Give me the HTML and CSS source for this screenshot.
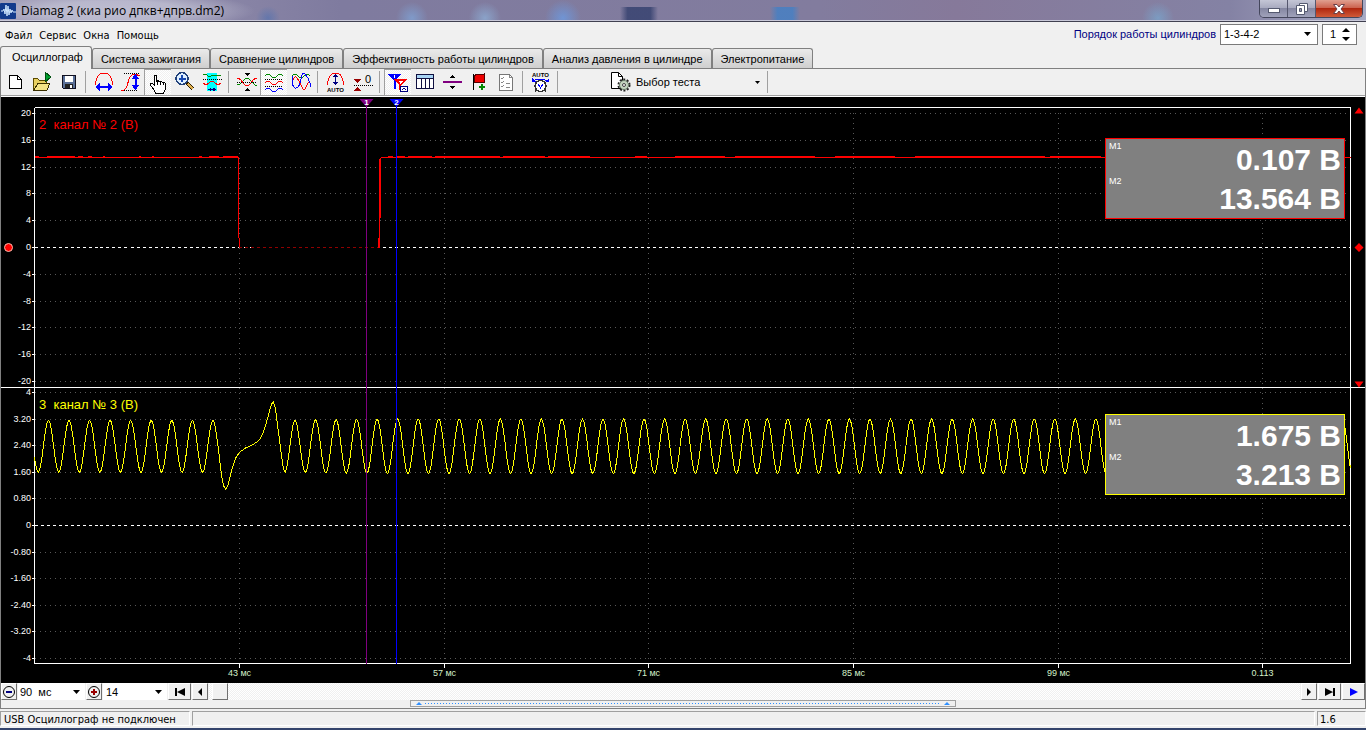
FILE: index.html
```html
<!DOCTYPE html>
<html lang="ru">
<head>
<meta charset="utf-8">
<title>Diamag 2 (киа рио дпкв+дпрв.dm2)</title>
<link rel="stylesheet" href="styles.css">
</head>
<body>
<header class="titlebar">
  <svg class="app-icon" viewBox="0 0 16 16"><rect width="16" height="16" rx="1" fill="#123a8c"/><path d="M1 8h2l1-2 1 5 1-9 1 11 1-10 1 9 1-6 1 4 1-3 1 2h3" fill="none" stroke="#cfe6ff"/></svg>
  <span class="title">Diamag 2 (киа рио дпкв+дпрв.dm2)</span>
  <div class="window-buttons">
    <button class="win" aria-label="Свернуть"><svg width="14" height="12" viewBox="0 0 14 12"><rect x="1.5" y="5.500" width="11" height="4" fill="#fff" stroke="#555a70"/></svg></button>
    <button class="win" aria-label="Развернуть"><svg width="14" height="14" viewBox="0 0 14 14"><path d="M4.500 1.500h8v8h-8z" fill="#fff" stroke="#555a70"/><path d="M1.500 3.500h8v9h-8z" fill="#fff" stroke="#555a70"/><path d="M4.500 6.500h2v3h-2z" fill="#9a9cb2" stroke="#555a70"/></svg></button>
    <button class="win close" aria-label="Закрыть"><svg width="14" height="12" viewBox="0 0 14 12"><path d="M1.500 1.500h3.500l2 2.500 2-2.500h3.500L9 6l3.500 4.500H9L7 8l-2 2.500H1.500L5 6z" fill="#fff" stroke="#6a4048"/></svg></button>
  </div>
</header>

<div class="menu-row">
  <nav class="menu">
    <button>Файл</button><button>Сервис</button><button>Окна</button><button>Помощь</button>
  </nav>
  <div class="order">
    <label for="order">Порядок работы цилиндров</label>
    <span class="combo framed order-combo"><select id="order"><option>1-3-4-2</option><option>1-2-4-3</option></select><svg class="chev" width="7" height="4" viewBox="0 0 7 4"><path d="M0 0h7L3.500 4z"/></svg></span>
    <span class="combo framed spin"><input id="cyl" type="text" value="1" aria-label="Номер цилиндра"><svg width="8" height="13" viewBox="0 0 8 13"><path d="M0 4h8L4 0zM0 9h8l-4 4z"/></svg></span>
  </div>
</div>

<nav class="tabs">
  <button class="tab active">Осциллограф</button>
  <button class="tab">Система зажигания</button>
  <button class="tab">Сравнение цилиндров</button>
  <button class="tab">Эффективность работы цилиндров</button>
  <button class="tab">Анализ давления в цилиндре</button>
  <button class="tab">Электропитание</button>
</nav>

<main class="page">
  <div class="toolbar">
    <button class="tool" aria-label="Новый"><svg viewBox="0 0 24 24"><path d="M6.500 5.500h8l4 4v9h-12z" fill="#fff" stroke="#000"/><path d="M14.500 5.500v4h4" fill="none" stroke="#000"/></svg></button>
    <button class="tool" aria-label="Открыть"><svg viewBox="0 0 24 24"><path d="M3.500 19.500v-11h4l2 2h7v9z" fill="#e8d060" stroke="#5a4a00"/><path d="M4 20l4-7h12l-3 7z" fill="#f4e486" stroke="#3a3000"/><path d="M15 2l6 5-6 5z" fill="#00a030" stroke="#005010"/></svg></button>
    <button class="tool" aria-label="Сохранить"><svg viewBox="0 0 24 24"><path d="M5.500 5.500h13v13h-12l-1-1z" fill="#5a7098" stroke="#101020"/><path d="M8 6h8v6H8z" fill="#fff"/><path d="M8 14h8v4H8z" fill="#222"/><path d="M13 15h2v3h-2z" fill="#fff"/></svg></button>
    <span class="sep"></span>
    <button class="tool" aria-label="Ширина"><svg viewBox="0 0 24 24"><path d="M3 15c0-3 1-4 2-7s4-5 7-5 6 2 7 5 2 4 2 7" fill="none" stroke="#f00"/><path d="M4 17h16" stroke="#00f" stroke-width="2"/><path d="M3 17l5-4v8zM21 17l-5-4v8z" fill="#00f"/></svg></button>
    <button class="tool" aria-label="Высота"><svg viewBox="0 0 24 24"><path d="M5 3.500h15M3 20.500h15" stroke="#000" stroke-dasharray="1 1"/><path d="M2 20h3c5-2 3-16 11-16l5 2" fill="none" stroke="#f00"/><path d="M16.500 6v13" stroke="#00f" stroke-width="2"/><path d="M16.500 4l-4 5h8zM16.500 20l-4-5h8z" fill="#00f"/></svg></button>
    <button class="tool pressed" aria-label="Рука"><svg viewBox="0 0 24 24"><path d="M8.500 14.500V4.500h2v6l1-1 2 1 1.500 0 1.500 1 2 0 1 1.500v5l-2 4h-8l-2-4-3-4v-1.500h2z" fill="#fff" stroke="#000"/><path d="M11.500 10v4M14.500 10v4M17.500 11v3" stroke="#000"/></svg></button>
    <button class="tool" aria-label="Лупа"><svg viewBox="0 0 24 24"><path d="M14 13l6 6" stroke="#302000" stroke-width="4"/><path d="M15 14l5 5" stroke="#e0b050" stroke-width="2"/><circle cx="9" cy="8.500" r="6" fill="#dff0ff" stroke="#20407a" stroke-width="1.500"/><path d="M5.500 8.500h7M9 5v7" stroke="#1848b0" stroke-width="2"/></svg></button>
    <button class="tool" aria-label="Фрагмент"><svg viewBox="0 0 24 24"><path d="M7 3h10v18H7z" fill="#0ff"/><path d="M3 5q2-2 4 0t4 1 5-1 5 0" fill="none" stroke="#080"/><path d="M3 9.500h19" stroke="#000" stroke-dasharray="1 1"/><path d="M3 13q3 3 6 0t6 0 6 0" fill="none" stroke="#f00"/><path d="M8 19.500h8" stroke="#000080"/><path d="M8 19.500l3-2v4zM16 19.500l-3-2v4z" fill="#000080"/></svg></button>
    <span class="sep"></span>
    <button class="tool" aria-label="Совместить"><svg viewBox="0 0 24 24"><path d="M2 15q3 0 6-4 4-6 8 0 3 4 6 5" fill="none" stroke="#080"/><path d="M2 8q3 0 6 5 4 5 8 0 3-5 6-5" fill="none" stroke="#f00"/><path d="M2 12.500h20" stroke="#000" stroke-dasharray="1 1"/><path d="M9 3h6l-3 3zM9 21h6l-3-3z"/></svg></button>
    <button class="tool pressed" aria-label="Раздельно"><svg viewBox="0 0 24 24"><g fill="none"><path d="M3 5q3-4 6 0t6 0 6 0" stroke="#080"/><path d="M3 12q3-4 6 0t6 0 6 0" stroke="#f00"/><path d="M3 19q3-4 6 0t6 0 6 0" stroke="#00f"/><path d="M3 8.500h18M3 15.500h18" stroke="#000" stroke-dasharray="1 1"/></g></svg></button>
    <button class="tool" aria-label="Наложение"><svg viewBox="0 0 24 24"><g fill="none"><path d="M3 6q3-4 6 0t6 0 6 0" stroke="#080"/><path d="M3 14q2-10 5-6t5 9 4 0 4-5" stroke="#f00"/><path d="M3 6q0 13 4 12t5-9 4-5 5 9l1 4" stroke="#00f"/></g></svg></button>
    <span class="sep"></span>
    <button class="tool" aria-label="Авто"><svg viewBox="0 0 24 24"><path d="M3 15c0-3 1-4 2-7s4-5 7-5 5 2 6 5 2 4 2 7" fill="none" stroke="#f00"/><path d="M11.500 5v9" stroke="#000080"/><path d="M9 7h5l-2.500-3zM9 12h5l-2.500 3z" fill="#000080"/><text x="3" y="22" class="micro">AUTO</text></svg></button>
    <button class="tool" aria-label="Ноль"><svg viewBox="0 0 24 24"><path d="M3 15.500h19" stroke="#000" stroke-dasharray="1 1"/><path d="M3 9h7l-3.500 4zM3 21h7l-3.500-4z" fill="#900"/><text x="14" y="13" class="zero">0</text></svg></button>
    <span class="sep"></span>
    <button class="tool pressed" aria-label="Маркеры"><svg viewBox="0 0 24 24"><path d="M2 3h13L9.500 9v9h-2V9z" fill="#00f"/><path d="M8 8h13l-5.500 6-1 5h-2v-6z" fill="#f00"/><path d="M8.500 4v3M13 10.500h3l-2 2" stroke="#fff" fill="none"/><path d="M14.500 15.500h7v5h-7z" fill="#fff" stroke="#000080"/><path d="M16 18h1l1-1 1 1h1" fill="none" stroke="#000080"/></svg></button>
    <button class="tool" aria-label="Таблица"><svg viewBox="0 0 24 24"><path d="M3.500 4.500h17v14h-17z" fill="#fff" stroke="#101040"/><path d="M4 5h16v3H4z" fill="#a8d4f4"/><path d="M4 8.500h16M8.500 8v10M12.500 8v10M16.500 8v10" stroke="#101040"/></svg></button>
    <button class="tool" aria-label="Уровень"><svg viewBox="0 0 24 24"><path d="M3 12h19" stroke="#800080" stroke-width="2"/><path d="M10 8h5l-2.500-3zM10 16h5l-2.500 3z"/></svg></button>
    <button class="tool" aria-label="Флаг"><svg viewBox="0 0 24 24"><path d="M6.500 4v16" stroke="#000"/><path d="M7 6l3-2 4 1 3-1v7l1 1-3 1-4-1-4 1z" fill="#e00" stroke="#500"/><path d="M12 17h6M15 14v6" stroke="#080" stroke-width="2"/></svg></button>
    <button class="tool" aria-label="Список"><svg viewBox="0 0 24 24"><path d="M5.500 4.500h10l3 3v13h-13z" fill="#fff" stroke="#777"/><path d="M15.500 4.500v3h3M7 8l1 1 2-2M7 12l1 1 2-2M7 16l1 1 2-2M12 13h4M12 17h4" fill="none" stroke="#888"/></svg></button>
    <span class="sep"></span>
    <button class="tool" aria-label="Автоопределение"><svg viewBox="0 0 24 24"><text x="3" y="7" class="micro">AUTO</text><path d="M4 11q7-4 15 0" fill="none" stroke="#00f"/><path d="M3 8v4h4zM20 8v4h-4z" fill="#00f"/><circle cx="11.500" cy="16" r="5.500" fill="#fff" stroke="#333" stroke-width="1.500"/><path d="M9 14l2.500 4 2.500-4" fill="none" stroke="#00f"/><path d="M7 20l-1 2M16 20l1 2" stroke="#333"/></svg></button>
    <span class="sep"></span>
    <button class="test"><svg viewBox="0 0 24 24"><path d="M3.500 2.500h7l4 4v12h-11z" fill="#fff" stroke="#000"/><path d="M10.500 2.500v4h4" fill="none" stroke="#000"/><circle cx="16" cy="15" r="5.500" fill="none" stroke="#222" stroke-width="2" stroke-dasharray="2 1.500"/><circle cx="16" cy="15" r="4.500" fill="#c4d4c0" stroke="#667a66"/><circle cx="16" cy="15" r="1.500" fill="#fff" stroke="#444"/></svg><span>Выбор теста</span><svg class="chev" width="5" height="3" viewBox="0 0 5 3"><path d="M0 0h5L2.500 3z"/></svg></button>
    <span class="sep"></span>
  </div>

  <section class="scope">
    <svg class="plot" id="plot" role="img" aria-label="Осциллограмма"></svg>
    <div class="readout readout-red">
      <span class="tag">M1</span><span class="value">0.107 В</span>
      <span class="tag">M2</span><span class="value">13.564 В</span>
    </div>
    <div class="readout readout-yellow">
      <span class="tag">M1</span><span class="value">1.675 В</span>
      <span class="tag">M2</span><span class="value">3.213 В</span>
    </div>
  </section>

  <div class="transport">
    <button class="key narrow" aria-label="Сжать"><svg width="14" height="14" viewBox="0 0 14 14"><circle cx="7" cy="7" r="5.500" fill="none" stroke="#000"/><path d="M4 7h6" stroke="#000080" stroke-width="2"/></svg></button>
    <span class="combo range"><select aria-label="Развёртка"><option>90&nbsp; мс</option></select><svg class="chev" width="7" height="4" viewBox="0 0 7 4"><path d="M0 0h7L3.500 4z"/></svg></span>
    <button class="key narrow" aria-label="Растянуть"><svg width="14" height="14" viewBox="0 0 14 14"><circle cx="7" cy="7" r="5.500" fill="none" stroke="#000"/><path d="M4 7h6M7 4v6" stroke="#900" stroke-width="2"/></svg></button>
    <span class="combo count"><select aria-label="Масштаб"><option>14</option></select><svg class="chev" width="7" height="4" viewBox="0 0 7 4"><path d="M0 0h7L3.500 4z"/></svg></span>
    <button class="key" aria-label="В начало"><svg width="12" height="8" viewBox="0 0 12 8"><path d="M1 0h2v8H1zM11 0v8L3 4z"/></svg></button>
    <button class="key narrow" aria-label="Назад"><svg width="4" height="8" viewBox="0 0 4 8"><path d="M4 0v8L0 4z"/></svg></button>
    <div class="track"><button class="key narrow thumb" aria-label="Прокрутка"></button></div>
    <button class="key narrow" aria-label="Вперёд"><svg width="4" height="8" viewBox="0 0 4 8"><path d="M0 0v8l4-4z"/></svg></button>
    <button class="key" aria-label="В конец"><svg width="12" height="8" viewBox="0 0 12 8"><path d="M9 0h2v8H9zM1 0v8l8-4z"/></svg></button>
    <button class="key" aria-label="Пуск"><svg width="8" height="8" viewBox="0 0 8 8"><path d="M0 0v8l8-4z" fill="#00f"/></svg></button>
  </div>
  <div class="splitter"><div class="grip"><svg width="6" height="3" viewBox="0 0 6 3"><path d="M0 3h6L3 0z"/></svg><span class="dots"></span><svg width="6" height="3" viewBox="0 0 6 3"><path d="M0 3h6L3 0z"/></svg></div></div>
</main>

<footer class="status">
  <span class="cell device">USB Осциллограф не подключен</span>
  <span class="cell fill"></span>
  <span class="cell version">1.6</span>
</footer>
<script src="plot.js"></script>
</body>
</html>
```

FILE: styles.css
```css
* { box-sizing: border-box; }
body {
  margin: 0;
  height: 100vh;
  display: flex;
  flex-direction: column;
  background: #f0f0f0;
  color: #000;
  font: 11px/14px "Liberation Sans", Arial, sans-serif;
  overflow: hidden;
}
button, select, input {
  font: inherit;
  color: inherit;
  margin: 0;
  padding: 0;
  border: 0;
  background: none;
  border-radius: 0;
  appearance: none;
  outline: 0;
}
svg { display: block; flex: none; }

.titlebar {
  flex: none;
  height: 22px;
  display: flex;
  align-items: flex-start;
  gap: 5px;
  border-bottom: 1px solid #404050;
  box-shadow: inset 0 -1px #c8c8d8;
  background:
    radial-gradient(ellipse 140px 20px at 115px 11px, #c4c4d6e0, #c4c4d6c0 50%, #c4c4d600),
    radial-gradient(circle at 268px 18px, #5070b0a0 0, #5070b000 12px),
    radial-gradient(circle at 412px 18px, #7fa8dcb0 0, #7fa8dc00 16px),
    radial-gradient(circle at 485px 18px, #8fb4dcb0 0, #8fb4dc00 16px),
    radial-gradient(circle at 563px 18px, #6c9ae0d0 0, #6c9ae000 18px),
    linear-gradient(90deg, #34406e00, #34406ed0 20% 80%, #34406e00) 620px 7px / 38px 14px no-repeat,
    linear-gradient(90deg, #3f80c800, #3f80c8c0 25% 75%, #3f80c800) 770px 7px / 30px 14px no-repeat,
    radial-gradient(circle at 1158px 18px, #78a8d0b0 0, #78a8d000 16px),
    linear-gradient(90deg, #9c98b4, #7f7b9f 25%, #827c9e 60%, #86799a 70%, #8482a4 90%, #a8aac4);
}
.app-icon { width: 16px; height: 16px; margin-top: 3px; }
.title { font: 12px/15px "Open Sans", "Noto Sans", sans-serif; padding-top: 3px; }
.window-buttons {
  margin-left: auto;
  margin-right: 3px;
  display: flex;
  height: 18px;
  border: 1px solid #44465c;
  border-top: 0;
  border-radius: 0 0 5px 5px;
  overflow: hidden;
}
.win {
  width: 28px;
  display: grid;
  place-items: center;
  border-right: 1px solid #55576e;
  background: linear-gradient(#c4c6d6, #a9abc0 45%, #8587a2 50%, #a0a2ba);
}
.close { width: 46px; border-right: 0; background: linear-gradient(#e0a090, #cc6450 45%, #b02810 50%, #d05a38); }

.menu-row { flex: none; height: 24px; display: flex; justify-content: space-between; }
.menu { display: flex; align-items: center; gap: 7px; padding: 3px 0 0 5px; font-family: "DejaVu Sans Condensed", "DejaVu Sans", sans-serif; }
.order { display: flex; align-items: center; gap: 4px; padding-right: 9px; }
.order label { color: #000080; }
.combo { display: flex; align-items: center; background: #fff; }
.combo select, .combo input { flex: 1; min-width: 0; height: 100%; padding-left: 3px; }
.framed { height: 21px; border: 1px solid #7a7a7a; }
.order-combo { width: 98px; padding-right: 6px; }
.spin { width: 35px; padding-right: 6px; }
.spin input { padding-left: 7px; }

.tabs { flex: none; display: flex; align-items: flex-end; border-bottom: 1px solid #808080; height: 23px; }
.tab {
  height: 20px;
  padding: 0 8px;
  border: 1px solid #808080;
  border-bottom: 0;
  border-radius: 3px 3px 0 0;
  background: linear-gradient(#eaeaea, #cfcfcf);
  white-space: nowrap;
}
.tab.active { height: 23px; margin-bottom: -1px; padding: 0 8px 2px 11px; background: #f0f0f0; }

.page { flex: 1; min-height: 0; display: flex; flex-direction: column; border: 1px solid #808080; border-top: 0; }
.toolbar { flex: none; height: 28px; display: flex; align-items: center; border-bottom: 1px solid #fff; box-shadow: inset 0 -1px #a0a0a0; padding-bottom: 1px; }
.tool { flex: none; width: 27px; height: 26px; display: grid; place-items: center; }
.tool svg, .test svg:first-child { width: 24px; height: 24px; }
.tool svg { shape-rendering: crispEdges; }
.pressed, .track { background: repeating-conic-gradient(#f0f0f0 0 25%, #fff 0 50%) 0 0 / 2px 2px; }
.pressed { border-left: 1px solid #a0a0a0; border-top: 1px solid #a0a0a0; }
.sep { flex: none; width: 8px; height: 22px; background: linear-gradient(#a0a0a0, #a0a0a0) 3px 0 / 1px 100% no-repeat; }
.test { display: flex; align-items: center; gap: 4px; width: 156px; margin-left: 46px; padding-right: 4px; text-align: left; }
.test span { flex: 1; }
.micro { font: bold 6px "Liberation Sans", sans-serif; }
.zero { font: 11px "Liberation Sans", sans-serif; }

.scope { flex: 1; min-height: 0; position: relative; background: #000; }
.plot { position: absolute; inset: 0; width: 100%; height: 100%; }
.plot text { font: 9px "Liberation Sans", Arial, sans-serif; fill: #fff; }
.plot .time { fill: #d4f0c8; text-anchor: middle; }
.plot .axis { text-anchor: end; }
.plot .name { font-size: 13px; white-space: pre; }
.plot .flag { font: bold 8px "Liberation Sans", sans-serif; text-anchor: middle; }
.readout {
  position: absolute;
  right: 20px;
  width: 240px;
  height: 81px;
  padding: 2px 3px 0;
  display: grid;
  grid-template: 35px 42px / auto 1fr;
  background: #808080;
  border: 1px solid;
  color: #fff;
}
.readout-red { top: 7%; border-color: #f00; }
.readout-yellow { top: 54.1%; border-color: #ff0; }
.tag { font-size: 9px; line-height: 10px; }
.value { font-size: 30px; font-weight: bold; line-height: 38px; text-align: right; }
.value ~ .value { padding-top: 4px; }

.transport { flex: none; height: 17px; display: flex; gap: 1px; background: #f0f0f0; }
.key { flex: none; width: 23px; display: grid; place-items: center; background: #f0f0f0; border: 1px solid; border-color: #fff #707070 #707070 #fff; }
.narrow { width: 16px; }
.range { width: 67px; padding-right: 5px; }
.count { width: 64px; padding-right: 5px; }
.range select { padding-left: 2px; }
.track { flex: 1; display: flex; padding-left: 3px; }
.splitter { flex: none; height: 8px; display: flex; justify-content: center; align-items: flex-start; }
.grip { width: 40%; height: 7px; display: flex; align-items: center; gap: 3px; padding: 0 5px; border: 1px solid #a0a0a0; fill: #2f8fff; }
.dots { flex: 1; height: 1px; background: repeating-linear-gradient(90deg, #2f8fff 0 1px, transparent 0 3px); }

.status {
  flex: none;
  height: 21px;
  display: flex;
  gap: 2px;
  padding: 2px 0;
  border-bottom: 2px solid #34446c;
  font-family: "DejaVu Sans Condensed", "DejaVu Sans", sans-serif;
}
.cell { border: 1px solid; border-color: #a0a0a0 #fff #fff #a0a0a0; padding: 1px 3px; white-space: nowrap; }
.device { width: 190px; }
.fill { flex: 1; }
.version { width: 49px; padding-left: 2px; }
```

FILE: plot.js
```js
const NS = "http://www.w3.org/2000/svg";
const plot = document.getElementById("plot");

function add(tag, attrs, text) {
  const node = document.createElementNS(NS, tag);
  for (const key in attrs) node.setAttribute(key, attrs[key]);
  if (text !== undefined) node.textContent = text;
  plot.appendChild(node);
  return node;
}

function line(x1, y1, x2, y2, stroke, dash) {
  add("line", { x1, y1, x2, y2, stroke, "stroke-dasharray": dash || "none", "shape-rendering": "crispEdges" });
}

/* Crankshaft sensor: regular teeth with one missing-tooth gap. Positions are
   fractions of the sweep, values are volts. */
const SWEEP = 1316;
function toothWave(t) {
  const x = t * SWEEP;
  if (x < 181) return 2.38 + 0.78 * Math.cos((2 * Math.PI * (x - 14)) / 20.55);
  if (x > 251) {
    const grow = Math.min(1, (x - 251) / 100) * 0.04;
    return 2.38 + (0.78 + grow) * Math.cos((2 * Math.PI * (x - 260.5)) / 20.535);
  }
  const gap = [[181, 2.9], [184, 2.3], [187, 1.5], [189, 1.2], [191, 1.1], [193, 1.17], [195, 1.4], [198, 1.75],
    [201, 2.02], [205, 2.2], [211, 2.33], [217, 2.41], [223, 2.52], [226, 2.62], [229, 2.82], [232, 3.1],
    [235, 3.45], [237, 3.65], [239, 3.71], [241, 3.5], [244, 2.8], [247, 2.1], [249, 1.7], [251, 1.6]];
  let i = 1;
  while (gap[i][0] < x) i++;
  const [a, va] = gap[i - 1], [b, vb] = gap[i];
  return va + ((vb - va) * (x - a)) / (b - a);
}

function draw() {
  plot.textContent = "";
  const W = plot.clientWidth, H = plot.clientHeight;
  const left = 33.5, right = W - 14.5, top = 10.5, bottom = H - 19.5;
  const middle = Math.round(top + (bottom - top) * 0.504) - 0.5;
  const px = (t) => left + t * (right - left);
  const snap = (v) => Math.floor(v) + 0.5;
  const y1 = (v) => (top + middle) / 2 - (v * (middle - top)) / 41.8;
  const y2 = (v) => (middle + bottom) / 2 - (v * (bottom - middle)) / 8.3;

  for (let i = 0; i < 6; i++) {
    const x = snap(px(0.1558 + i * 0.15552));
    line(x, top + 5, x, bottom, "#585858", "1 4");
    line(x, bottom, x, bottom + 4, "#fff");
    add("text", { x, y: bottom + 12.5, class: "time" }, ["43 мс", "57 мс", "71 мс", "85 мс", "99 мс", "0.113"][i]);
  }
  for (let i = -5; i <= 5; i++) {
    const ya = snap(y1(i * 4)), yb = snap(y2(i * 0.8));
    const label = i === 0 ? "0" : Math.abs(i) === 5 ? String((i / 5) * 4) : (i * 0.8).toFixed(2);
    [[ya, String(i * 4)], [yb, label]].forEach(([y, text]) => {
      line(left, y, right, y, i ? "#585858" : "#fff", i ? "1 4" : "3 3");
      line(left - 3, y, left, y, "#fff");
      add("text", { x: left - 3.5, y: y + 2.5, class: "axis" }, text);
    });
  }

  line(left, top, right, top, "#fff");
  line(left, top, left, bottom, "#fff");
  line(right, top, right, bottom, "#fff");
  line(left, bottom, right, bottom, "#fff");
  line(0, middle, W, middle, "#fff");

  /* Camshaft sensor */
  const hi = snap(y1(13.45)), zero = snap(y1(0));
  const fall = snap(px(0.1548)), rise = snap(px(0.2625));
  line(left, hi, fall, hi, "#f00");
  line(fall, hi - 1, fall, zero - 10, "#f00");
  line(fall + 1, zero - 10, fall + 1, zero, "#f00");
  line(fall, zero, rise, zero, "#900000", "3 3");
  line(rise - 1, zero, rise - 1, zero - 10, "#f00");
  line(rise, zero, rise, hi + 1, "#f00");
  line(rise + 1, zero - 30, rise + 1, hi, "#f00");
  line(rise + 1, hi, right, hi, "#f00");
  [[0, 4], [12, 40], [43, 48], [53, 57], [68, 70], [104, 106], [117, 119], [164, 167], [174, 184], [188, 203],
    [353, 358], [362, 370], [373, 397], [400, 465], [468, 510], [513, 555], [600, 612], [640, 690], [700, 780],
    [800, 860], [880, 1010], [1015, 1066]].forEach(([a, b]) =>
    line(px(a / SWEEP), hi - 1, px(b / SWEEP), hi - 1, "#f00"));

  let d = "";
  for (let x = left; x <= right; x++) {
    d += (d ? "L" : "M") + x + " " + y2(toothWave((x - left) / (right - left))).toFixed(1);
  }
  add("path", { d, fill: "none", stroke: "#ff0", "shape-rendering": "crispEdges" });

  [[0.2523, "#800080", "1"], [0.2751, "#00f", "2"]].forEach(([t, color, name]) => {
    const x = snap(px(t));
    line(x, 2, x, bottom, color);
    add("path", { d: `M${x - 7} 2H${x + 7}L${x} 10z`, fill: color });
    add("text", { x, y: 8, class: "flag" }, name);
  });

  add("text", { x: left + 4.5, y: top + 21.5, class: "name", style: "fill:#f00" }, "2  канал № 2 (В)");
  add("text", { x: left + 4.5, y: middle + 21.5, class: "name", style: "fill:#ff0" }, "3  канал № 3 (В)");

  add("circle", { cx: 7.5, cy: zero, r: 4, fill: "#f00", stroke: "#fba" });
  const e = W - 6.5;
  add("path", { d: `M${e - 4} ${top + 6}h9l-4.500-6zM${e - 4} ${middle - 6}h9l-4.500 6zM${e - 4} ${zero}l4.500-4.500 4.500 4.500-4.500 4.500z`, fill: "#f00" });
}

draw();
addEventListener("resize", draw);
```
